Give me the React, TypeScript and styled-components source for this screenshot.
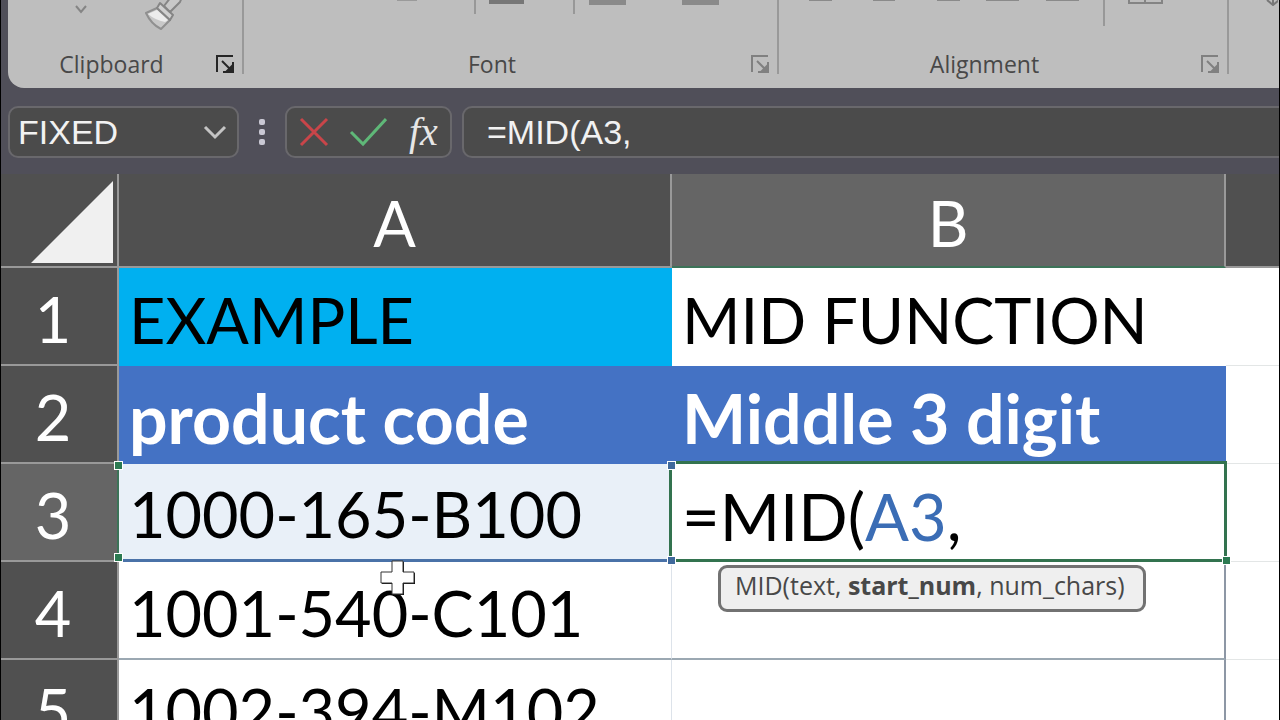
import React from "react";
import styled, { createGlobalStyle, css } from "styled-components";

const GlobalStyle = createGlobalStyle`
  *, *::before, *::after { box-sizing: border-box; }
  body { margin: 0; background: #000; }
  button, input { font: inherit; color: inherit; border: 0; background: none; padding: 0; margin: 0; }
  svg { display: block; }
`;

const Window = styled.main`
  height: 100vh;
  overflow: hidden;
  border: solid #000;
  border-width: 0 1px;
  background: #504f59;
`;

/* ---------- Ribbon ---------- */

const Ribbon = styled.header`
  display: flex;
  align-items: flex-start;
  margin-left: 7px;
  padding-bottom: 14px;
  border-bottom-left-radius: 16px;
  background: #bebebe;
  font-family: "Open Sans", "Noto Sans", sans-serif;
`;

const Group = styled.section<{ $width?: number }>`
  display: flex;
  flex-direction: column;
  height: 74px;
  ${(p) =>
    p.$width
      ? css`
          flex: none;
          width: ${p.$width}px;
          border-right: 2px solid #999;
        `
      : css`
          flex: 1;
          min-width: 0;
        `}
`;

const Tools = styled.div`
  display: flex;
  align-items: flex-start;
  height: 54px;
  overflow: hidden;
`;

const Tool = styled.button<{ $gap: number }>`
  flex: none;
  margin-left: ${(p) => p.$gap}px;
`;

const Divider = styled.span<{ $gap: number; $height: number }>`
  flex: none;
  width: 2px;
  height: ${(p) => p.$height}px;
  margin-left: ${(p) => p.$gap}px;
  background: #989898;
`;

const GroupFooter = styled.div`
  display: flex;
  align-items: center;
  height: 20px;
  padding-right: 7px;
`;

const GroupName = styled.h2<{ $trail?: number }>`
  flex: 1;
  margin: 0;
  padding-right: ${(p) => p.$trail ?? 0}px;
  text-align: center;
  font-size: 23px;
  line-height: 20px;
  font-weight: 400;
  color: #484848;
`;

const Launcher = styled.button<{ $dim?: boolean }>`
  flex: none;
  color: ${(p) => (p.$dim ? "#808080" : "#262626")};
`;

/* ---------- Formula bar ---------- */

const FormulaBar = styled.div`
  display: flex;
  align-items: center;
  padding: 18px 0 16px 7px;
  font-family: "Liberation Sans", Arial, sans-serif;
  font-size: 34px;
  line-height: 40px;
  color: #f2f2f2;
`;

const Field = styled.div`
  display: flex;
  align-items: center;
  flex: none;
  height: 52px;
  border: 2px solid #69686c;
  border-radius: 10px;
  background: #4b4b4b;
`;

const NameBox = styled(Field)`
  width: 231px;
  padding: 0 10px 0 8px;
`;

const NameInput = styled.input`
  flex: 1;
  min-width: 0;
  height: 44px;
  outline: none;
`;

const Grip = styled.span`
  display: grid;
  gap: 4px;
  margin: 0 20px;
`;

const GripDot = styled.i`
  width: 6px;
  height: 6px;
  border-radius: 2px;
  background: #c9c8d4;
`;

const Actions = styled(Field)`
  width: 167px;
  gap: 20px;
  padding: 0 10px 0 12px;
`;

const FunctionButton = styled.button`
  padding-left: 2px;
  font-family: "Liberation Serif", "Times New Roman", serif;
  font-size: 40px;
  line-height: 44px;
  font-style: italic;
  color: #e6e6e6;
`;

const FormulaField = styled(Field)`
  flex: 1;
  min-width: 0;
  margin-left: 10px;
  padding-left: 23px;
  border-right: 0;
  border-radius: 10px 0 0 10px;
`;

const FormulaInput = styled.input`
  flex: 1;
  min-width: 0;
  height: 44px;
  outline: none;
`;

/* ---------- Sheet ---------- */

const Sheet = styled.table`
  width: 100%;
  table-layout: fixed;
  border-collapse: separate;
  border-spacing: 0;
  background: #fff;
  font-family: Lato, Carlito, sans-serif;
  font-size: 63px;
  line-height: 72px;
`;

const Column = styled.col<{ $width?: number }>`
  width: ${(p) => (p.$width ? `${p.$width}px` : "auto")};
`;

const ColumnHead = styled.th<{ $active?: boolean }>`
  height: 94px;
  padding: 6px 0 0;
  border-right: 2px solid #999;
  border-bottom: 2px solid ${(p) => (p.$active ? "#3c7358" : "#999")};
  background: ${(p) => (p.$active ? "#656565" : "#505050")};
  color: #fff;
  font-weight: 400;
  &:last-child { border-right: 0; }
`;

const Corner = styled(ColumnHead)`
  padding: 4px 3px 0 0;
  vertical-align: middle;
`;

const SelectAll = styled.button`
  display: block;
  margin-left: auto;
`;

const RowHead = styled.th<{ $active?: boolean }>`
  height: 98px;
  padding: 6px 12px 0 0;
  border-right: 2px solid ${(p) => (p.$active ? "#3c7358" : "#999")};
  border-bottom: 2px solid #999;
  background: ${(p) => (p.$active ? "#656565" : "#505050")};
  color: #fff;
  font-weight: 400;
`;

type Tone = "plain" | "cyan" | "title" | "source" | "edit" | "empty" | "outlined";

const tones = {
  plain: css`
    border-right: 1px solid #dde3ea;
    border-bottom: 2px solid #9ba8b2;
  `,
  cyan: css`
    background: #00b0f0;
  `,
  title: css`
    background: #4472c4;
    color: #fff;
    font-size: 68px;
    font-weight: 700;
  `,
  source: css`
    background: #e9f0f8;
    border-bottom: 3px solid #4a72a8;
  `,
  edit: css`
    font-size: 65px;
    &::before {
      content: "";
      position: absolute;
      inset: -3px -1px 0 -3px;
      border: 3px solid #33734f;
    }
  `,
  empty: css`
    border-bottom: 1px solid #e3e6e6;
  `,
  outlined: css`
    border-right: 2px solid #8d97a5;
    border-bottom: 2px solid #9ba8b2;
  `,
};

const Cell = styled.td<{ $tone?: Tone }>`
  position: relative;
  height: 98px;
  padding: 5px 0 0 10px;
  color: #000;
  white-space: nowrap;
  ${(p) => (p.$tone ? tones[p.$tone] : "")}
`;

const Reference = styled.span`
  color: #3b6db5;
`;

const Handle = styled.span<{ $x: "left" | "right"; $y: "top" | "bottom"; $green?: boolean }>`
  position: absolute;
  ${(p) => p.$x}: -5px;
  ${(p) => p.$y}: -3px;
  width: 9px;
  height: 9px;
  border: 1px solid #fff;
  background: ${(p) => (p.$green ? "#2c7a52" : "#40699c")};
  z-index: 1;
`;

const Tooltip = styled.div`
  position: absolute;
  z-index: 2;
  top: 101px;
  left: 46px;
  height: 47px;
  padding: 0 18px 0 14px;
  border: 3px solid #727272;
  border-radius: 9px;
  background: #efefef;
  color: #484848;
  font-family: "Open Sans", "Noto Sans", sans-serif;
  font-size: 25px;
  line-height: 35px;
`;

const Pointer = styled.svg`
  position: absolute;
  z-index: 3;
  top: -2px;
  left: 261px;
`;

function LauncherIcon() {
  return (
    <svg width="20" height="20" viewBox="0 0 20 20" fill="none" stroke="currentColor" strokeWidth="2" aria-hidden="true">
      <path d="M2 18V2h16" />
      <path d="M7 7l10 10" />
      <path d="M18 8v10H8" />
      <path d="M17 12v5h-5z" fill="currentColor" />
    </svg>
  );
}

function Stub({ width, height, color = "#8a8a8a" }: { width: number; height: number; color?: string }) {
  return (
    <svg width={width} height={height} aria-hidden="true">
      <rect width={width} height={height} fill={color} />
    </svg>
  );
}

function RibbonView() {
  return (
    <Ribbon>
      <Group $width={236}>
        <Tools>
          <Tool $gap={66} aria-label="Paste options">
            <svg width="14" height="14" viewBox="0 0 14 14" fill="none" stroke="#858585" strokeWidth="2">
              <path d="M2 6l5 6 5-6" />
            </svg>
          </Tool>
          <Tool $gap={56} aria-label="Format Painter">
            <svg width="38" height="30" viewBox="0 0 38 30" strokeLinejoin="round">
              <path d="M2 13L13 8L26 20L17 29Q7 24 2 13Z" fill="#c8c8c8" stroke="#909090" strokeWidth="2" />
              <path d="M4 14L13 10L24 20L21 22Q11 20 4 14Z" fill="#ececec" />
              <path d="M13 8L16 3L29 15L26 20Z" fill="#d0d0d0" stroke="#858585" strokeWidth="2" />
              <path d="M20 6L27 -3H38L36 2L26 12Z" fill="#c8c8c8" stroke="#858585" strokeWidth="2" />
            </svg>
          </Tool>
        </Tools>
        <GroupFooter>
          <GroupName>Clipboard</GroupName>
          <Launcher aria-label="Clipboard settings"><LauncherIcon /></Launcher>
        </GroupFooter>
      </Group>

      <Group $width={535}>
        <Tools>
          <Tool $gap={153} aria-label="Bold"><Stub width={20} height={1} color="#9a9a9a" /></Tool>
          <Divider $gap={57} $height={14} />
          <Tool $gap={13} aria-label="Borders"><Stub width={35} height={4} color="#777" /></Tool>
          <Divider $gap={49} $height={14} />
          <Tool $gap={14} aria-label="Fill colour"><Stub width={37} height={5} /></Tool>
          <Tool $gap={56} aria-label="Font colour"><Stub width={37} height={5} /></Tool>
        </Tools>
        <GroupFooter>
          <GroupName $trail={10}>Font</GroupName>
          <Launcher $dim aria-label="Font settings"><LauncherIcon /></Launcher>
        </GroupFooter>
      </Group>

      <Group $width={450}>
        <Tools>
          <Tool $gap={30} aria-label="Align left"><Stub width={23} height={1} /></Tool>
          <Tool $gap={41} aria-label="Centre"><Stub width={22} height={1} /></Tool>
          <Tool $gap={42} aria-label="Align right"><Stub width={23} height={1} /></Tool>
          <Tool $gap={26} aria-label="Decrease indent"><Stub width={33} height={1} /></Tool>
          <Tool $gap={27} aria-label="Increase indent"><Stub width={33} height={1} /></Tool>
          <Divider $gap={24} $height={26} />
          <Tool $gap={23} aria-label="Merge cells">
            <svg width="35" height="5" fill="none" stroke="#848484" strokeWidth="2">
              <path d="M1 -4V3H34V-4M17 -4V3" />
            </svg>
          </Tool>
        </Tools>
        <GroupFooter>
          <GroupName $trail={10}>Alignment</GroupName>
          <Launcher $dim aria-label="Alignment settings"><LauncherIcon /></Launcher>
        </GroupFooter>
      </Group>

      <Group>
        <Tools>
          <Tool $gap={37} aria-label="Number format">
            <svg width="12" height="6" fill="none" stroke="#777" strokeWidth="2">
              <path d="M1 0L7 5L13 0M7 0V5" />
            </svg>
          </Tool>
        </Tools>
      </Group>
    </Ribbon>
  );
}

function FormulaBarView() {
  return (
    <FormulaBar>
      <NameBox>
        <NameInput aria-label="Name box" defaultValue="FIXED" />
        <button aria-label="Show names">
          <svg width="24" height="16" viewBox="0 0 24 16" fill="none" stroke="#c4c4c4" strokeWidth="3">
            <path d="M2 3l10 10L22 3" />
          </svg>
        </button>
      </NameBox>
      <Grip aria-hidden="true">
        <GripDot />
        <GripDot />
        <GripDot />
      </Grip>
      <Actions>
        <button aria-label="Cancel">
          <svg width="30" height="30" viewBox="0 0 30 30" fill="none" stroke="#c94549" strokeWidth="3">
            <path d="M2 2l26 26M28 2L2 28" />
          </svg>
        </button>
        <button aria-label="Enter">
          <svg width="38" height="30" viewBox="0 0 38 30" fill="none" stroke="#5fb878" strokeWidth="3">
            <path d="M2 15l12 12L37 2" />
          </svg>
        </button>
        <FunctionButton aria-label="Insert function">fx</FunctionButton>
      </Actions>
      <FormulaField>
        <FormulaInput aria-label="Formula" defaultValue="=MID(A3," />
      </FormulaField>
    </FormulaBar>
  );
}

function SheetView() {
  return (
    <Sheet>
      <colgroup>
        <Column $width={118} />
        <Column $width={553} />
        <Column $width={554} />
        <Column />
      </colgroup>
      <thead>
        <tr>
          <Corner>
            <SelectAll aria-label="Select all cells">
              <svg width="84" height="84" viewBox="0 0 84 84">
                <path d="M83 1V83H1Z" fill="#f0f0f0" />
              </svg>
            </SelectAll>
          </Corner>
          <ColumnHead scope="col">A</ColumnHead>
          <ColumnHead scope="col" $active>B</ColumnHead>
          <ColumnHead />
        </tr>
      </thead>
      <tbody>
        <tr>
          <RowHead scope="row">1</RowHead>
          <Cell $tone="cyan">EXAMPLE</Cell>
          <Cell>MID FUNCTION</Cell>
          <Cell $tone="empty" />
        </tr>
        <tr>
          <RowHead scope="row">2</RowHead>
          <Cell $tone="title">product code</Cell>
          <Cell $tone="title">Middle 3 digit</Cell>
          <Cell $tone="empty" />
        </tr>
        <tr>
          <RowHead scope="row" $active>3</RowHead>
          <Cell $tone="source">
            1000-165-B100
            <Handle $x="left" $y="top" $green />
            <Handle $x="left" $y="bottom" $green />
          </Cell>
          <Cell $tone="edit">
            =MID(<Reference>A3</Reference>,
            <Handle $x="left" $y="top" />
            <Handle $x="left" $y="bottom" />
            <Handle $x="right" $y="bottom" $green />
            <Tooltip role="tooltip">
              MID(text, <b>start_num</b>, num_chars)
            </Tooltip>
          </Cell>
          <Cell $tone="empty" />
        </tr>
        <tr>
          <RowHead scope="row">4</RowHead>
          <Cell $tone="plain">
            1001-540-C101
            <Pointer width="36" height="36" viewBox="0 0 36 36" aria-hidden="true">
              <path d="M13 2h11v11h11v11h-11v11h-11v-11h-11v-11h11z" fill="#111" />
              <path d="M12 1h11v11h11v11h-11v11h-11v-11h-11v-11h11z" fill="#fff" stroke="#333" strokeWidth="1" />
            </Pointer>
          </Cell>
          <Cell $tone="outlined" />
          <Cell $tone="empty" />
        </tr>
        <tr>
          <RowHead scope="row">5</RowHead>
          <Cell $tone="plain">1002-394-M102</Cell>
          <Cell $tone="outlined" />
          <Cell $tone="empty" />
        </tr>
      </tbody>
    </Sheet>
  );
}

export default function App() {
  return (
    <Window>
      <GlobalStyle />
      <RibbonView />
      <FormulaBarView />
      <SheetView />
    </Window>
  );
}
